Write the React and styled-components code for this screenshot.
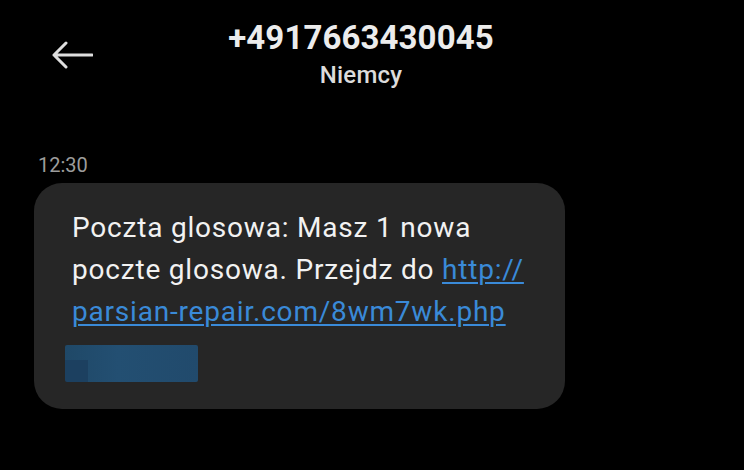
import React from "react";
import styled, { createGlobalStyle } from "styled-components";

const Global = createGlobalStyle`
  html, body { margin: 0; padding: 0; background: #000; }
  body { font-family: Roboto, "Noto Sans", "Liberation Sans", sans-serif; }
`;

const Screen = styled.div`
  width: 744px;
  height: 470px;
  background: #000;
  overflow: hidden;
  display: flex;
  flex-direction: column;
`;

const Header = styled.header`
  display: flex;
  align-items: flex-start;
  padding: 18px 115px 0 51px;
  height: 110px;
  box-sizing: border-box;
`;

const BackButton = styled.div`
  width: 42px;
  height: 28px;
  margin-top: 23px;
  color: #dedede;
  display: flex;
`;

const TitleBlock = styled.div`
  flex: 1;
  display: flex;
  flex-direction: column;
  align-items: center;
`;

const Phone = styled.div`
  font-size: 33px;
  font-weight: 700;
  color: #ececec;
  line-height: 40px;
  letter-spacing: 0.1px;
`;

const Country = styled.div`
  font-size: 24px;
  font-weight: 500;
  color: #dcdcdc;
  line-height: 30px;
  margin-top: 2px;
  letter-spacing: 0.2px;
`;

const Thread = styled.main`
  display: flex;
  flex-direction: column;
  align-items: flex-start;
  padding: 43px 0 0 34px;
`;

const Time = styled.div`
  font-size: 20px;
  color: #9c9c9c;
  line-height: 24px;
  margin-left: 4px;
  margin-bottom: 6px;
`;

const Bubble = styled.div`
  width: 531px;
  height: 226px;
  box-sizing: border-box;
  background: #262626;
  border-radius: 28px;
  padding: 24px 20px 0 38px;
  font-size: 28px;
  line-height: 42px;
  letter-spacing: 0.8px;
  color: #f2f2f2;
`;

const Link = styled.span`
  color: #3a8ad8;
  text-decoration: underline;
  text-decoration-thickness: 2px;
  text-underline-offset: 3px;
`;

const Blurred = styled.div`
  width: 133px;
  height: 37px;
  margin: 12px 0 0 -7px;
  background:
    linear-gradient(#1c4060, #1c4060) left bottom / 23px 22px no-repeat,
    linear-gradient(90deg, #1f4867 0%, #234f72 40%, #214a6c 100%);
  border-radius: 2px;
`;

export default function App() {
  return (
    <>
      <Global />
      <Screen>
        <Header>
          <BackButton>
            <svg width="42" height="28" viewBox="0 0 42 28" fill="none">
              <path d="M41 14H3M15 2L3 14l12 12" stroke="currentColor" strokeWidth="3" strokeLinecap="round" strokeLinejoin="round" />
            </svg>
          </BackButton>
          <TitleBlock>
            <Phone>+4917663430045</Phone>
            <Country>Niemcy</Country>
          </TitleBlock>
        </Header>
        <Thread>
          <Time>12:30</Time>
          <Bubble>
            Poczta glosowa: Masz 1 nowa
            <br />
            poczte glosowa. Przejdz do <Link>http://</Link>
            <br />
            <Link>parsian-repair.com/8wm7wk.php</Link>
            <Blurred />
          </Bubble>
        </Thread>
      </Screen>
    </>
  );
}
